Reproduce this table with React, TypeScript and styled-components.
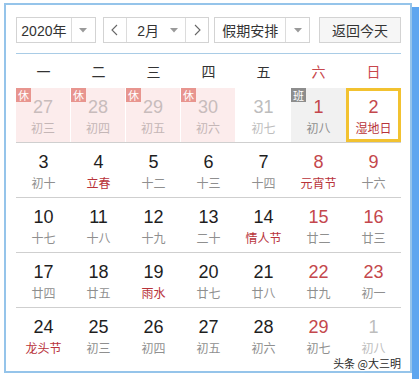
import React from "react";
import styled, { createGlobalStyle } from "styled-components";

const GlobalStyle = createGlobalStyle`
  html, body { margin: 0; padding: 0; background: #ffffff; }
  body { font-family: "Liberation Sans", "Noto Sans CJK SC", sans-serif; }
  * { box-sizing: border-box; }
`;

const Page = styled.div`
  width: 419px;
  height: 379px;
  display: flex;
  align-items: flex-start;
  padding: 3px 0 0 4px;
  overflow: hidden;
`;

const Frame = styled.div`
  position: relative;
  width: 408px;
  height: 370px;
  border: 2px solid #95c4ea;
  padding: 12px 9px 0 10px;
  background: #ffffff;
`;

const Strip = styled.div`
  width: 7px;
  height: 372px;
  margin-top: 4px;
  background: #5ea6ef;
`;

const Controls = styled.div`
  display: flex;
  height: 26px;
  align-items: stretch;
`;

const Box = styled.div<{ $w: number; $ml?: number; $bg?: string }>`
  display: flex;
  width: ${(p) => p.$w}px;
  margin-left: ${(p) => p.$ml ?? 0}px;
  border: 1px solid #d3d3d3;
  background: ${(p) => p.$bg ?? "#ffffff"};
  font-family: "Liberation Sans", "Noto Sans CJK SC", sans-serif;
  font-size: 14px;
  color: #333;
`;

const Label = styled.div<{ $pl?: number }>`
  flex: 1;
  display: flex;
  align-items: center;
  justify-content: center;
  padding-left: ${(p) => p.$pl ?? 0}px;
  white-space: nowrap;
`;

const ArrowCell = styled.div<{ $divider?: boolean }>`
  width: ${(p) => (p.$divider ? 24 : 22)}px;
  display: flex;
  align-items: center;
  justify-content: center;
  border-left: ${(p) => (p.$divider ? "1px solid #dcdcdc" : "none")};
`;

const NavBtn = styled.div<{ $side: "l" | "r" }>`
  width: 23px;
  display: flex;
  align-items: center;
  justify-content: center;
  border-right: ${(p) => (p.$side === "l" ? "1px solid #dcdcdc" : "none")};
  border-left: ${(p) => (p.$side === "r" ? "1px solid #dcdcdc" : "none")};
`;

const TodayBtn = styled(Box)`
  justify-content: center;
  align-items: center;
`;

const Divider = styled.div`
  height: 1px;
  margin-top: 10px;
  background: #a9cce6;
`;

const Grid = styled.div<{ $h: number; $line?: boolean }>`
  display: grid;
  grid-template-columns: repeat(7, 55px);
  height: ${(p) => p.$h}px;
  border-bottom: ${(p) => (p.$line ? "1px solid #cfcfcf" : "none")};
`;

const WeekDay = styled.div<{ $red?: boolean }>`
  display: flex;
  align-items: center;
  justify-content: center;
  font-family: "Noto Sans CJK SC", sans-serif;
  font-size: 14px;
  color: ${(p) => (p.$red ? "#c8474c" : "#333")};
`;

type Kind = "normal" | "holiday" | "work" | "selected";

const Cell = styled.div<{ $kind: Kind }>`
  position: relative;
  display: flex;
  flex-direction: column;
  align-items: center;
  height: 54px;
  padding-top: ${(p) => (p.$kind === "selected" ? 5 : 8)}px;
  border-right: ${(p) => (p.$kind === "holiday" ? "1px solid #ffffff" : "none")};
  border: ${(p) => (p.$kind === "selected" ? "3px solid #f2c230" : undefined)};
  background: ${(p) =>
    p.$kind === "holiday" ? "#fcecec" : p.$kind === "work" ? "#f1f1f1" : "transparent"};
`;

const Num = styled.div<{ $color: string }>`
  font-family: "Liberation Sans", sans-serif;
  font-size: 18px;
  line-height: 22px;
  color: ${(p) => p.$color};
`;

const Lunar = styled.div<{ $color: string }>`
  margin-top: 2px;
  font-family: "Noto Sans CJK SC", sans-serif;
  font-size: 12px;
  line-height: 16px;
  color: ${(p) => p.$color};
  white-space: nowrap;
`;

const Badge = styled.div<{ $bg: string }>`
  position: absolute;
  top: 0;
  left: 0;
  width: 15px;
  height: 14px;
  background: ${(p) => p.$bg};
  color: #ffffff;
  font-family: "Noto Sans CJK SC", sans-serif;
  font-size: 11px;
  line-height: 14px;
  text-align: center;
`;

const Watermark = styled.div`
  position: absolute;
  right: 9px;
  bottom: 2px;
  font-family: "Noto Sans CJK SC", sans-serif;
  font-size: 11px;
  line-height: 12px;
  color: #2a2a2a;
  text-shadow: 0 0 2px #fff, 0 0 2px #fff;
`;

const Caret = () => (
  <svg width="8" height="5" viewBox="0 0 8 5">
    <path d="M0 0 L8 0 L4 4.5 Z" fill="#9a9a9a" />
  </svg>
);

const Chevron = ({ dir }: { dir: "l" | "r" }) => (
  <svg width="7" height="12" viewBox="0 0 7 12">
    <path
      d={dir === "l" ? "M6 1 L1 6 L6 11" : "M1 1 L6 6 L1 11"}
      fill="none"
      stroke="#666"
      strokeWidth="1.1"
    />
  </svg>
);

type Day = {
  n: number;
  l: string;
  kind?: Kind;
  dim?: boolean;
  weekend?: boolean;
  fest?: boolean;
  badge?: "休" | "班";
};

const RED = "#c4474c";
const FEST = "#b8333a";

const rows: Day[][] = [
  [
    { n: 27, l: "初三", kind: "holiday", dim: true, badge: "休" },
    { n: 28, l: "初四", kind: "holiday", dim: true, badge: "休" },
    { n: 29, l: "初五", kind: "holiday", dim: true, badge: "休" },
    { n: 30, l: "初六", kind: "holiday", dim: true, badge: "休" },
    { n: 31, l: "初七", dim: true },
    { n: 1, l: "初八", kind: "work", weekend: true, badge: "班" },
    { n: 2, l: "湿地日", kind: "selected", weekend: true, fest: true },
  ],
  [
    { n: 3, l: "初十" },
    { n: 4, l: "立春", fest: true },
    { n: 5, l: "十二" },
    { n: 6, l: "十三" },
    { n: 7, l: "十四" },
    { n: 8, l: "元宵节", weekend: true, fest: true },
    { n: 9, l: "十六", weekend: true },
  ],
  [
    { n: 10, l: "十七" },
    { n: 11, l: "十八" },
    { n: 12, l: "十九" },
    { n: 13, l: "二十" },
    { n: 14, l: "情人节", fest: true },
    { n: 15, l: "廿二", weekend: true },
    { n: 16, l: "廿三", weekend: true },
  ],
  [
    { n: 17, l: "廿四" },
    { n: 18, l: "廿五" },
    { n: 19, l: "雨水", fest: true },
    { n: 20, l: "廿七" },
    { n: 21, l: "廿八" },
    { n: 22, l: "廿九", weekend: true },
    { n: 23, l: "初一", weekend: true },
  ],
  [
    { n: 24, l: "龙头节", fest: true },
    { n: 25, l: "初三" },
    { n: 26, l: "初四" },
    { n: 27, l: "初五" },
    { n: 28, l: "初六" },
    { n: 29, l: "初七", weekend: true },
    { n: 1, l: "初八", dim: true },
  ],
];

const weekDays = ["一", "二", "三", "四", "五", "六", "日"];

function numColor(d: Day) {
  if (d.kind === "holiday") return "#c8bcbc";
  if (d.dim) return "#bdbdbd";
  if (d.weekend) return RED;
  return "#1e1e1e";
}

function lunarColor(d: Day) {
  if (d.kind === "holiday") return "#c4b6b6";
  if (d.dim) return "#bdbdbd";
  if (d.fest) return FEST;
  return "#8f8f8f";
}

export default function App() {
  return (
    <Page>
      <GlobalStyle />
      <Frame>
        <Controls>
          <Box $w={80}>
            <Label>2020年</Label>
            <ArrowCell $divider>
              <Caret />
            </ArrowCell>
          </Box>
          <Box $w={107} $ml={7}>
            <NavBtn $side="l">
              <Chevron dir="l" />
            </NavBtn>
            <Label $pl={6}>2月</Label>
            <ArrowCell>
              <Caret />
            </ArrowCell>
            <NavBtn $side="r">
              <Chevron dir="r" />
            </NavBtn>
          </Box>
          <Box $w={96} $ml={5}>
            <Label>假期安排</Label>
            <ArrowCell $divider>
              <Caret />
            </ArrowCell>
          </Box>
          <TodayBtn $w={82} $ml={9} $bg="#f6f6f6">
            返回今天
          </TodayBtn>
        </Controls>
        <Divider />
        <Grid $h={34}>
          {weekDays.map((w, i) => (
            <WeekDay key={w} $red={i >= 5}>
              {w}
            </WeekDay>
          ))}
        </Grid>
        {rows.map((row, ri) => (
          <Grid key={ri} $h={ri < 4 ? 55 : 54} $line={ri < 4}>
            {row.map((d, ci) => (
              <Cell key={ci} $kind={d.kind ?? "normal"}>
                {d.badge && (
                  <Badge $bg={d.badge === "休" ? "#e8958f" : "#8d8d8d"}>{d.badge}</Badge>
                )}
                <Num $color={numColor(d)}>{d.n}</Num>
                <Lunar $color={lunarColor(d)}>{d.l}</Lunar>
              </Cell>
            ))}
          </Grid>
        ))}
        <Watermark>头条 @大三明</Watermark>
      </Frame>
      <Strip />
    </Page>
  );
}
